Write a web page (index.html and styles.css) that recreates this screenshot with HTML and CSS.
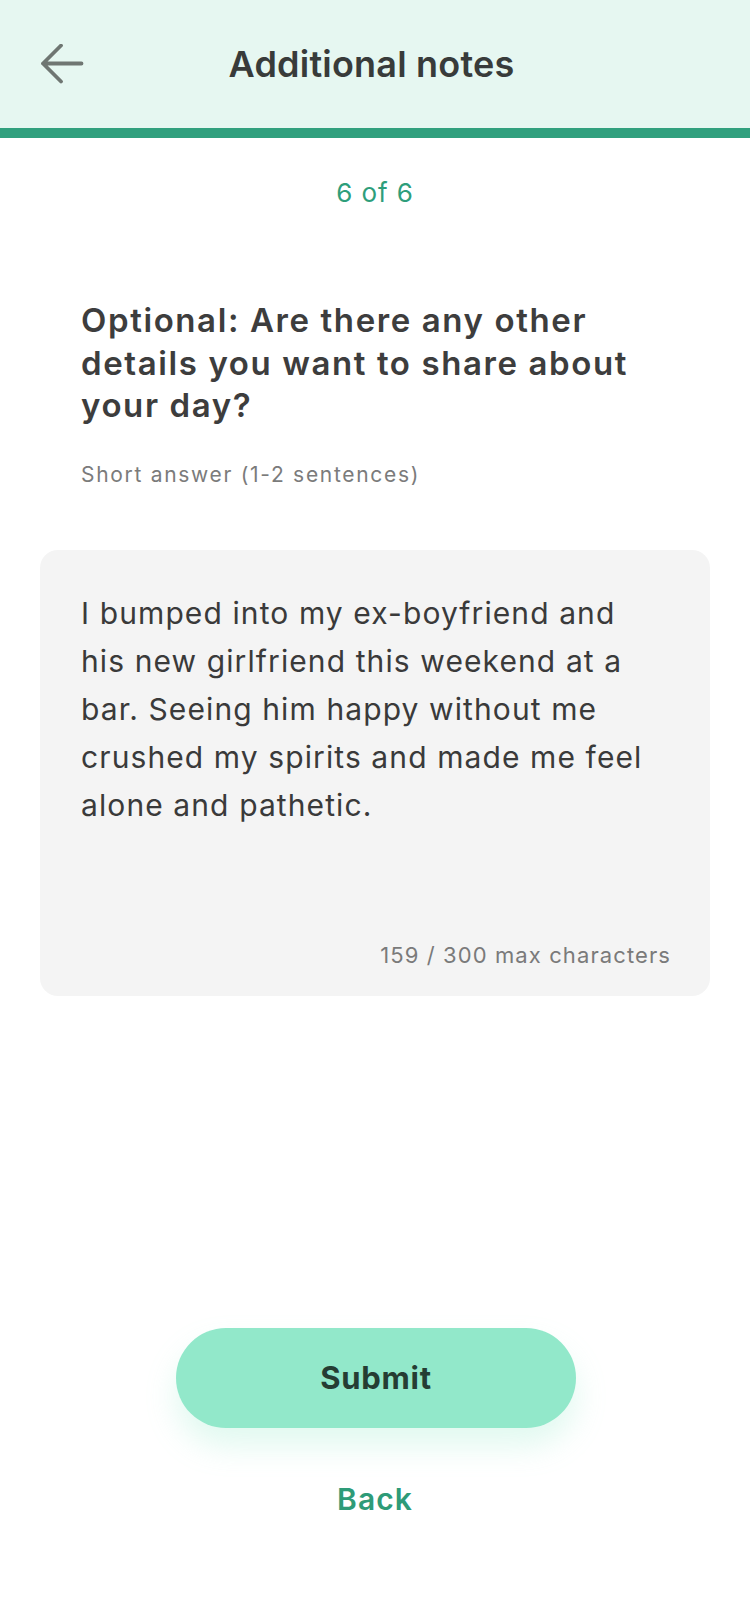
FILE: index.html
```html
<!DOCTYPE html>
<html lang="en">
<head>
<meta charset="utf-8">
<title>Additional notes</title>
<link rel="stylesheet" href="styles.css">
</head>
<body>
<div class="screen">
  <header class="topbar">
    <div class="topbar-left">
      <svg class="back-icon" width="44" height="40" viewBox="0 0 44 40" aria-hidden="true">
        <path d="M41.5 19.5 H3 M21 1.5 L3 19.5 L21 37.5" fill="none" stroke="#6f7672" stroke-width="3.8" stroke-linecap="round" stroke-linejoin="round"/>
      </svg>
    </div>
    <h1 class="topbar-title">Additional notes</h1>
    <div class="topbar-right"></div>
  </header>

  <main class="content">
    <p class="step">6 of 6</p>
    <h2 class="question">Optional: Are there any other details you want to share about your day?</h2>
    <p class="hint">Short answer (1-2 sentences)</p>

    <div class="answer-box">
      <p class="answer-text">I bumped into my ex-boyfriend and his new girlfriend this weekend at a bar. Seeing him happy without me crushed my spirits and made me feel alone and pathetic.</p>
      <p class="counter">159 / 300 max characters</p>
    </div>

    <div class="actions">
      <button class="btn-submit" type="button">Submit</button>
      <a class="link-back" href="#">Back</a>
    </div>
  </main>
</div>
</body>
</html>
```

FILE: styles.css
```css
* {
  box-sizing: border-box;
}

html, body {
  margin: 0;
  padding: 0;
  background: #ffffff;
}

body {
  font-family: Inter, "Noto Sans", "Liberation Sans", sans-serif;
  color: #3c3c3c;
}

.screen {
  width: 750px;
  min-height: 1624px;
  display: flex;
  flex-direction: column;
}

.topbar {
  height: 138px;
  background: #e6f7f1;
  border-bottom: 10px solid #31a07e;
  display: grid;
  grid-template-columns: 1fr auto 1fr;
  align-items: center;
}

.topbar-left {
  padding-left: 40px;
  display: flex;
  align-items: center;
}

.back-icon {
  display: block;
}

.topbar-title {
  margin: 0 7px 0 0;
  font-size: 36px;
  line-height: 44px;
  font-weight: 600;
  color: #383b3a;
  letter-spacing: 0.2px;
}

.content {
  display: flex;
  flex-direction: column;
  padding: 0 40px;
}

.step {
  margin: 39px 0 0;
  text-align: center;
  font-size: 26px;
  line-height: 32px;
  color: #2e9e7b;
  font-weight: 400;
  letter-spacing: 0.9px;
}

.question {
  margin: 90px 0 0;
  padding: 0 41px;
  font-size: 33px;
  line-height: 42.5px;
  font-weight: 600;
  color: #3d3d3d;
  letter-spacing: 1.6px;
}

.hint {
  margin: 34px 0 0;
  padding: 0 41px;
  font-size: 21px;
  line-height: 28px;
  color: #7b7b7b;
  letter-spacing: 1.7px;
}

.answer-box {
  margin-top: 61px;
  height: 446px;
  background: #f4f4f4;
  border-radius: 18px;
  padding: 39px 39px 27px 41px;
  display: flex;
  flex-direction: column;
}

.answer-text {
  margin: 0;
  max-width: 576px;
  font-size: 30px;
  line-height: 48px;
  color: #3a3a3a;
  letter-spacing: 1.1px;
}

.counter {
  margin: auto 0 0;
  text-align: right;
  font-size: 22px;
  line-height: 28px;
  color: #7a7a7a;
  letter-spacing: 1.1px;
}

.actions {
  margin-top: 332px;
  display: flex;
  flex-direction: column;
  align-items: center;
}

.btn-submit {
  width: 400px;
  height: 100px;
  border: none;
  border-radius: 50px;
  background: #92e8ca;
  color: #253d33;
  font-family: Inter, "Noto Sans", "Liberation Sans", sans-serif;
  font-size: 31px;
  font-weight: 700;
  letter-spacing: 0.7px;
  box-shadow: 0 18px 30px rgba(146, 232, 202, 0.28);
  margin-left: 2px;
}

.link-back {
  margin-top: 51px;
  font-size: 30px;
  line-height: 40px;
  font-weight: 600;
  color: #2e9b78;
  text-decoration: none;
  letter-spacing: 1.1px;
}
```
